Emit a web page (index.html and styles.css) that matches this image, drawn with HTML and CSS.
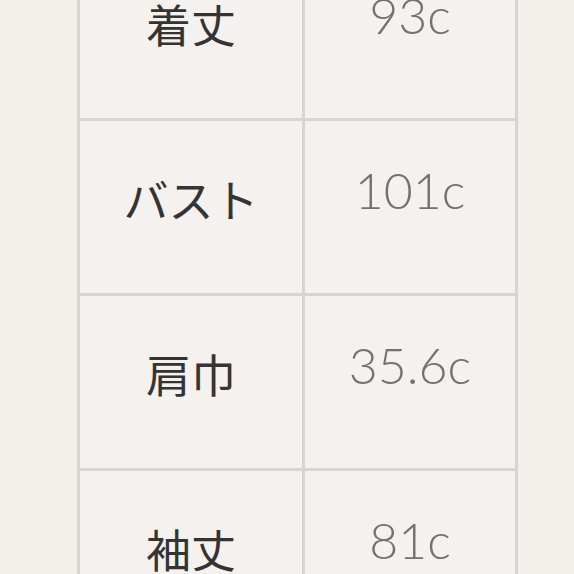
FILE: index.html
```html
<!DOCTYPE html>
<html lang="ja">
<head>
<meta charset="utf-8">
<link rel="stylesheet" href="styles.css">
</head>
<body>
<div class="table">
  <div class="cell label">着丈</div><div class="cell value">93c</div>
  <div class="cell label">バスト</div><div class="cell value">101c</div>
  <div class="cell label">肩巾</div><div class="cell value">35.6c</div>
  <div class="cell label">袖丈</div><div class="cell value">81c</div>
</div>
</body>
</html>
```
FILE: styles.css
```css
html, body {
  margin: 0;
  padding: 0;
  background: #f2efeb;
  overflow: hidden;
  height: 574px;
}
.table {
  display: grid;
  grid-template-columns: 222px 210px;
  grid-auto-rows: 172px;
  gap: 3px;
  padding: 3px;
  width: max-content;
  margin-left: 77px;
  margin-top: -57px;
  background: #d9d3d1;
}
.cell {
  background: #f4f1ee;
  display: flex;
  align-items: center;
  justify-content: center;
  padding-bottom: 18px;
  box-sizing: border-box;
}
.label {
  font-family: "Noto Sans CJK JP", sans-serif;
  font-size: 45px;
  font-weight: 400;
  color: #353434;
}
.value {
  font-family: Lato, sans-serif;
  font-weight: 300;
  font-size: 50px;
  color: #737171;
  padding-bottom: 34px;
}
```
